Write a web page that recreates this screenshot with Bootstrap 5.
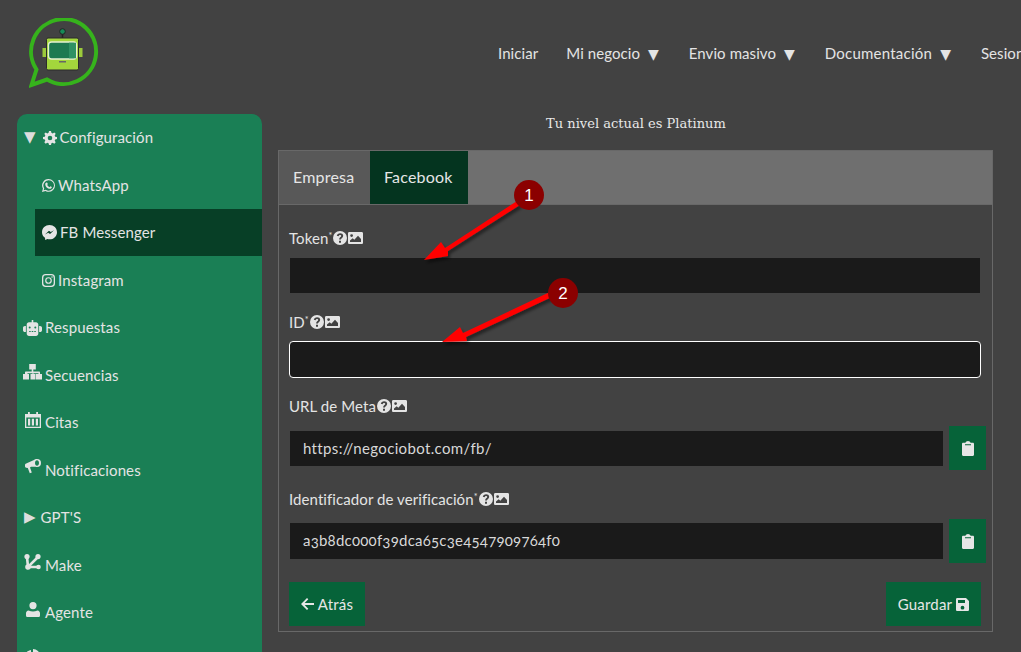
<!DOCTYPE html>
<html lang="es">
<head>
<meta charset="utf-8">
<title>Facebook</title>
<link rel="stylesheet" href="https://cdn.jsdelivr.net/npm/bootstrap@5.3.0/dist/css/bootstrap.min.css">
<style>
html,body{height:652px;overflow:hidden}
body{background:#424242;color:#e4e4e4;font-family:Lato,"Open Sans",sans-serif;font-size:15px;letter-spacing:.2px;position:relative;width:1021px}
.ico{fill:currentColor;flex:none}
.topbar{height:114px;flex-wrap:nowrap;overflow:hidden}
.brand-box{width:498px;flex:none;padding:18px 0 0 29px;align-self:flex-start}
.top-links{gap:29px;flex-wrap:nowrap;white-space:nowrap;margin-top:-8px;letter-spacing:.08px}
.top-links a{color:#e4e4e4;text-decoration:none;padding:0}
.top-links a:first-child{margin-right:-1px}
.top-links a:nth-child(4){letter-spacing:.23px}
.tri{font-family:"DejaVu Sans",sans-serif;font-size:14px;margin-left:4px;margin-right:1px;letter-spacing:0}
.side-menu{width:245px;margin-left:17px;flex:none;background:#1a7f55;border-radius:10px 10px 0 0;height:538px;overflow:hidden;padding:0;margin-bottom:0;list-style:none;letter-spacing:.12px}
.side-menu li{height:47.5px;display:flex;align-items:center;padding:0 0 .2px 6px}
.side-menu li.sub{margin-left:18px;padding-left:7px}
.side-menu li.now{background:#073f26;height:47px;margin-bottom:.5px}
.side-menu .ico{margin-right:3px}
.side-menu .ico.wide{margin-right:4px}
.side-menu .tri{font-size:15px;line-height:1;margin:0 7px 0 1px;color:#ddd}
.side-menu .tri.right{margin-right:5px}
.side-menu .ico.up{margin-top:-6px}
.main-col{width:715px;margin-left:16px;flex:none}
.level{font-family:"DejaVu Serif",serif;font-size:13px;height:36px;line-height:20px;letter-spacing:.02px;color:#e8e8e8;padding-left:268px}
.panel-box{border:1px solid #686868;height:482px}
.tab-row{background:#6f6f6f;height:54px;border-bottom:1px solid #686868;flex-wrap:nowrap}
.tab-row a{height:53px;display:flex;align-items:center;color:#e6e6e6;text-decoration:none;padding:0 14px 1px;border-radius:0;width:91px;font-size:16px}
.tab-row a.off{background:#585858}
.tab-row a.on{background:#04341f;width:98px}
.form-wrap{padding:23px 11px 5px 10px}
.fld-label{display:flex;align-items:center;height:20px;margin:0 0 10px;letter-spacing:.08px}
.fld-label.gap-next{margin-bottom:9px}
.fld-label svg{margin-left:1px}
.fld-star{font-size:9px;align-self:flex-start;margin:2px 0 0;line-height:12px}
.dark-in.form-control{background:#1a1a1a;color:#d8d8d8;border:0;border-radius:0;height:35px;margin:0 1px 19px;width:690px;padding:0 13px;font-size:15px;letter-spacing:.35px;box-shadow:none}
.dark-in.form-control.lit{height:37px;width:692px;margin:0 0 18px;border:1px solid #fff;border-radius:4px}
.dark-in.form-control.mono{font-variant-numeric:oldstyle-nums;letter-spacing:.22px;padding-bottom:2px}
.copy-row{height:44px;margin:0 -5px 19px 1px;gap:6px;flex-wrap:nowrap}
.copy-row .dark-in.form-control{margin:0;width:653px;flex:none}
.copy-row .dark-in.h36{height:36px}
.act-btn.btn{background:#066339;border:0;border-radius:0;color:#e6e6e6;height:44px;padding:0;display:flex;align-items:center;justify-content:center;font-size:15px;letter-spacing:.2px}
.w37{width:37px}.w76{width:76px}.w95{width:95px}
.overlay{position:absolute;left:0;top:0;pointer-events:none}
.overlay text{font-family:"Liberation Sans",sans-serif;font-size:17px;fill:#fff;text-anchor:middle;letter-spacing:0}
</style>
</head>
<body>
<svg width="0" height="0" class="position-absolute">
 <defs>
  <symbol id="i-help" viewBox="0 0 14 14"><path fill-rule="evenodd" d="M7 0a7 7 0 1 1 0 14A7 7 0 0 1 7 0zm-.9 8.600h1.800c0-1.200 2.300-1.600 2.300-3.800C10.200 3.100 8.800 2.300 7.100 2.300c-1.700 0-3 .9-3.300 2.500l1.800.5c.2-.8.7-1.200 1.400-1.200.7 0 1.200.3 1.200.9 0 1-2.100 1.300-2.100 3.600zM6 9.700v2h2v-2z"/></symbol>
  <symbol id="i-img" viewBox="0 0 15 12"><path fill-rule="evenodd" d="M1.300 0h12.400C14.400 0 15 .6 15 1.300v9.400c0 .7-.6 1.300-1.300 1.300H1.300C.6 12 0 11.400 0 10.700V1.300C0 .6.600 0 1.300 0zM3.600 2.200a1.400 1.400 0 1 0 0 2.800 1.400 1.400 0 0 0 0-2.800zM2 10h11V7L10 3.700 6.300 7.700 4.700 6.200 2 8.500z"/></symbol>
  <symbol id="i-clip" viewBox="0 0 12 15"><path d="M1.200 1.800h2.300C3.700.8 4.800 0 6 0s2.300.8 2.500 1.800h2.300c.7 0 1.200.5 1.200 1.200v10.800c0 .7-.5 1.200-1.200 1.200H1.200C.5 15 0 14.500 0 13.800V3C0 2.300.5 1.800 1.200 1.800zM3 3.200v1.100h6V3.200z"/></symbol>
 </defs>
</svg>

<nav class="topbar d-flex align-items-center">
  <div class="brand-box">
    <svg width="71" height="70" viewBox="0 0 71 70" aria-label="logo">
      <path d="M7.500 51.500L2.500 67 18 61.500A32.500 32.500 0 1 0 7.500 51.500z" fill="none" stroke="#36b31c" stroke-width="4" stroke-linejoin="miter"/>
      <path d="M33.500 15v5" stroke="#222" stroke-width="1.500"/>
      <circle cx="33.500" cy="13.500" r="2.800" fill="#178a57" stroke="#222"/>
      <rect x="13.500" y="30" width="3.500" height="9" fill="#9ccb3b"/>
      <rect x="50" y="30" width="3.500" height="9" fill="#9ccb3b"/>
      <rect x="17.500" y="20" width="32" height="32" rx="1.500" fill="#a3d63c" stroke="#2b2b2b"/>
      <rect x="19.500" y="24" width="28" height="17" rx="3" fill="#1d7a50" stroke="#e6f2cf" stroke-width="1.300"/>
      <rect x="40" y="24.700" width="7" height="15.600" fill="#2f9163"/>
      <rect x="30" y="43" width="7" height="1.500" fill="#666"/>
    </svg>
  </div>
  <div class="nav top-links">
    <a href="#">Iniciar</a>
    <a href="#">Mi negocio <span class="tri">▼</span></a>
    <a href="#">Envio masivo <span class="tri">▼</span></a>
    <a href="#">Documentación <span class="tri">▼</span></a>
    <a href="#">Sesion</a>
  </div>
</nav>

<div class="d-flex align-items-start">
  <ul class="side-menu">
    <li><span class="tri">▼</span>
      <svg class="ico" width="14" height="14" viewBox="0 0 14 14"><path fill-rule="evenodd" d="M6 0h2l.4 1.800 1.300.6 1.600-1 1.400 1.400-1 1.600.5 1.300 1.800.3v2l-1.800.4-.5 1.300 1 1.600-1.400 1.400-1.600-1-1.300.5L8 14H6l-.4-1.800-1.300-.5-1.600 1-1.400-1.400 1-1.600-.5-1.300L0 8V6l1.800-.3.5-1.300-1-1.600 1.400-1.400 1.600 1 1.300-.6zM7 4.700a2.300 2.300 0 1 0 0 4.600 2.300 2.300 0 0 0 0-4.600z"/></svg>
      Configuración</li>
    <li class="sub">
      <svg class="ico" width="13" height="13" viewBox="0 0 14 14"><path fill-rule="evenodd" d="M7.100 0A6.900 6.900 0 0 1 7.100 13.800c-1.200 0-2.300-.3-3.300-.9L0 14l1-3.700A6.900 6.900 0 0 1 7.100 0zm0 1.300a5.600 5.600 0 0 0-4.700 8.600l-.6 2.200 2.300-.6a5.600 5.600 0 1 0 3-10.200zM5 3.700c.3 0 .5 0 .6.300l.7 1.500-.7 1c.6 1.100 1.400 1.800 2.500 2.300l.9-1 1.600.8c0 1.200-1 1.900-2 1.900C6 10.500 3.300 7.800 3.500 5.300c.1-.8.700-1.600 1.500-1.600z"/></svg>
      WhatsApp</li>
    <li class="sub now">
      <svg class="ico" width="15" height="15" viewBox="0 0 14 14"><path fill-rule="evenodd" d="M7 0c3.900 0 7 2.900 7 6.700s-3.100 6.700-7 6.700c-.7 0-1.400-.1-2-.3L3 14l-.2-2.100C1.100 10.700 0 8.800 0 6.700 0 2.900 3.100 0 7 0zM2.800 8.900l3-1.700 1.700 1.300 3.700-3.600-3 1.700L6.500 5.300z"/></svg>
      FB Messenger</li>
    <li class="sub">
      <svg class="ico" width="13" height="13" viewBox="0 0 14 14"><path fill-rule="evenodd" d="M4 0h6a4 4 0 0 1 4 4v6a4 4 0 0 1-4 4H4a4 4 0 0 1-4-4V4a4 4 0 0 1 4-4zm0 1.400A2.600 2.600 0 0 0 1.400 4v6A2.600 2.600 0 0 0 4 12.600h6a2.600 2.600 0 0 0 2.600-2.600V4A2.600 2.600 0 0 0 10 1.400zm3 2A3.600 3.600 0 1 1 7 10.600 3.600 3.600 0 0 1 7 3.400zm0 1.300a2.300 2.300 0 1 0 0 4.600 2.300 2.300 0 0 0 0-4.600zm3.800-2.300a.8.800 0 1 1 0 1.700.8.800 0 0 1 0-1.700z"/></svg>
      Instagram</li>
    <li>
      <svg class="ico" width="19" height="16" viewBox="0 0 19 16"><path fill-rule="evenodd" d="M8.700 0h1.600v2.300H13c1.300 0 2.300 1 2.300 2.300v9c0 1.300-1 2.400-2.300 2.400H6c-1.300 0-2.300-1.100-2.300-2.400v-9C3.700 3.300 4.700 2.300 6 2.300h2.700zM6.700 6.500a1 1 0 1 0 0 2 1 1 0 0 0 0-2zm5.600 0a1 1 0 1 0 0 2 1 1 0 0 0 0-2zM6.200 11v1h1.500v-1zm2.500 0v1h1.600v-1zm2.600 0v1h1.500v-1zM1.900 6h1v6h-1C.9 12 0 11.200 0 10.200V7.800C0 6.800.9 6 1.900 6zm14.200 0h1c1 0 1.900.8 1.900 1.800v2.400c0 1-.9 1.800-1.900 1.800h-1z"/></svg>
      Respuestas</li>
    <li>
      <svg class="ico up" width="19" height="16" viewBox="0 0 19 16"><path d="M6.200 0h6.600v5.500H10.300v2H16c.6 0 1 .4 1 1V10h2v5.500h-6V10h2.500V9.300h-5V10h2v5.500H7.500V10h2v-.7h-5V10H6v5.500H0V10h2V8.500c0-.6.400-1 1-1h5.700v-2H6.200z"/></svg>
      Secuencias</li>
    <li>
      <svg class="ico up wide" width="16" height="16" viewBox="0 0 16 16" style="margin-left:2px"><path fill-rule="evenodd" d="M3 0h1.800v2h6.400V0H13v2h3v14H0V2h3zM1.300 5.500v9.200h13.400V5.500zM3 6.700h2.200v6.800H3zm3.800 0H9v6.800H6.800zm4 0H13v6.800h-2.200z"/></svg>
      Citas</li>
    <li>
      <svg class="ico up wide" width="16" height="16" viewBox="0 0 16 16" style="margin-left:2px"><path fill-rule="evenodd" d="M12 0a4 4 0 1 1 0 8c-.5 0-.9-.1-1.300-.2L6 7.700l-1 .7 1.800 5-2 .9L2.800 9 1.200 8.800C.5 8.700 0 8 0 7.300V5.900c0-.7.500-1.300 1.200-1.400L9 1A4 4 0 0 1 12 0zm0 1.300c-1.200 0-2 1.200-2 2.700s.8 2.700 2 2.700 2-1.200 2-2.700-.8-2.700-2-2.700z"/></svg>
      Notificaciones</li>
    <li><span class="tri right">▶</span>GPT'S</li>
    <li>
      <svg class="ico up wide" width="17" height="16" viewBox="0 0 17 16" style="margin-left:1px"><path d="M3 3l1 10L14 3M4 13h10" fill="none" stroke="currentColor" stroke-width="2.600"/><circle cx="3" cy="2.600" r="2.600"/><circle cx="14" cy="2.600" r="2.600"/><circle cx="4" cy="13" r="2.800"/><circle cx="14.500" cy="13" r="2.300"/></svg>
      Make</li>
    <li>
      <svg class="ico up" width="14" height="16" viewBox="0 0 14 16" style="margin-left:3px;margin-right:5px"><path d="M7 0a3.600 3.600 0 1 1 0 7.200A3.600 3.600 0 0 1 7 0zM2.500 8.500C4 9.200 5.500 9.500 7 9.500s3-.3 4.500-1c1.500.2 2.500 1.300 2.500 2.700v2.300c0 1-.8 1.500-1.700 1.500H1.700C.8 15 0 14.500 0 13.500v-2.300c0-1.400 1-2.500 2.500-2.700z"/></svg>
      Agente</li>
    <li>
      <svg class="ico up" width="16" height="16" viewBox="0 0 16 16" style="margin-left:1px"><path d="M7 1v8l6 5A7.500 7.500 0 1 1 7 1zm2-1a7 7 0 0 1 7 7H9z"/></svg>
    </li>
  </ul>

  <main class="main-col">
    <p class="level mb-0">Tu nivel actual es Platinum</p>
    <div class="panel-box">
      <div class="nav tab-row">
        <a class="off" href="#">Empresa</a>
        <a class="on" href="#">Facebook</a>
      </div>
      <form class="form-wrap">
        <label class="fld-label">Token<span class="fld-star">*</span><svg class="ico" width="14" height="14"><use href="#i-help"/></svg><svg class="ico" width="15" height="12"><use href="#i-img"/></svg></label>
        <input class="form-control dark-in" type="text" aria-label="Token">
        <label class="fld-label gap-next">ID<span class="fld-star">*</span><svg class="ico" width="14" height="14"><use href="#i-help"/></svg><svg class="ico" width="15" height="12"><use href="#i-img"/></svg></label>
        <input class="form-control dark-in lit" type="text" aria-label="ID">
        <label class="fld-label">URL de Meta<svg class="ico" width="14" height="14"><use href="#i-help"/></svg><svg class="ico" width="15" height="12"><use href="#i-img"/></svg></label>
        <div class="d-flex align-items-center copy-row">
          <input class="form-control dark-in" type="text" value="https://negociobot.com/fb/" aria-label="URL de Meta">
          <button type="button" class="btn act-btn w37" aria-label="Copiar"><svg class="ico" width="12" height="15"><use href="#i-clip"/></svg></button>
        </div>
        <label class="fld-label">Identificador de verificación<span class="fld-star">*</span><svg class="ico" width="14" height="14"><use href="#i-help"/></svg><svg class="ico" width="15" height="12"><use href="#i-img"/></svg></label>
        <div class="d-flex align-items-center copy-row">
          <input class="form-control dark-in h36 mono" type="text" value="a3b8dc000f39dca65c3e4547909764f0" aria-label="Identificador">
          <button type="button" class="btn act-btn w37" aria-label="Copiar"><svg class="ico" width="12" height="15"><use href="#i-clip"/></svg></button>
        </div>
        <div class="d-flex justify-content-between">
          <button type="button" class="btn act-btn w76">
            <svg class="ico me-1" width="13" height="12" viewBox="0 0 13 12"><path d="M6 0l1.300 1.300L3.700 5H13v2H3.700l3.600 3.700L6 12 0 6z"/></svg>Atrás</button>
          <button type="button" class="btn act-btn w95">Guardar
            <svg class="ico ms-1" width="13" height="13" viewBox="0 0 13 13"><path fill-rule="evenodd" d="M1.300 0h8.700L13 3v8.700c0 .7-.6 1.300-1.300 1.300H1.300C.6 13 0 12.400 0 11.700V1.300C0 .6.600 0 1.300 0zM2 2v3h7V2zm4.500 5.800a1.900 1.900 0 1 0 0 3.800 1.900 1.900 0 0 0 0-3.800z"/></svg></button>
        </div>
      </form>
    </div>
  </main>
</div>

<svg class="overlay" width="1021" height="652" viewBox="0 0 1021 652">
  <defs><filter id="sh" x="-20%" y="-20%" width="150%" height="150%"><feDropShadow dx="2" dy="3" stdDeviation="1.500" flood-color="#000" flood-opacity=".45"/></filter></defs>
  <g fill="#f00" stroke="none" filter="url(#sh)">
    <path d="M424 260L441 242 445 248 517 201 520 205 448 251 448 256z"/>
    <path d="M442 342L460 327 463 333 552 291 554 296 466 337 467 341z"/>
  </g>
  <circle cx="529" cy="195" r="15" fill="#8b0000"/>
  <text x="529" y="201">1</text>
  <circle cx="563" cy="293" r="15" fill="#8b0000"/>
  <text x="563" y="299">2</text>
</svg>
<script src="https://cdn.jsdelivr.net/npm/bootstrap@5.3.0/dist/js/bootstrap.bundle.min.js"></script>
</body>
</html>
